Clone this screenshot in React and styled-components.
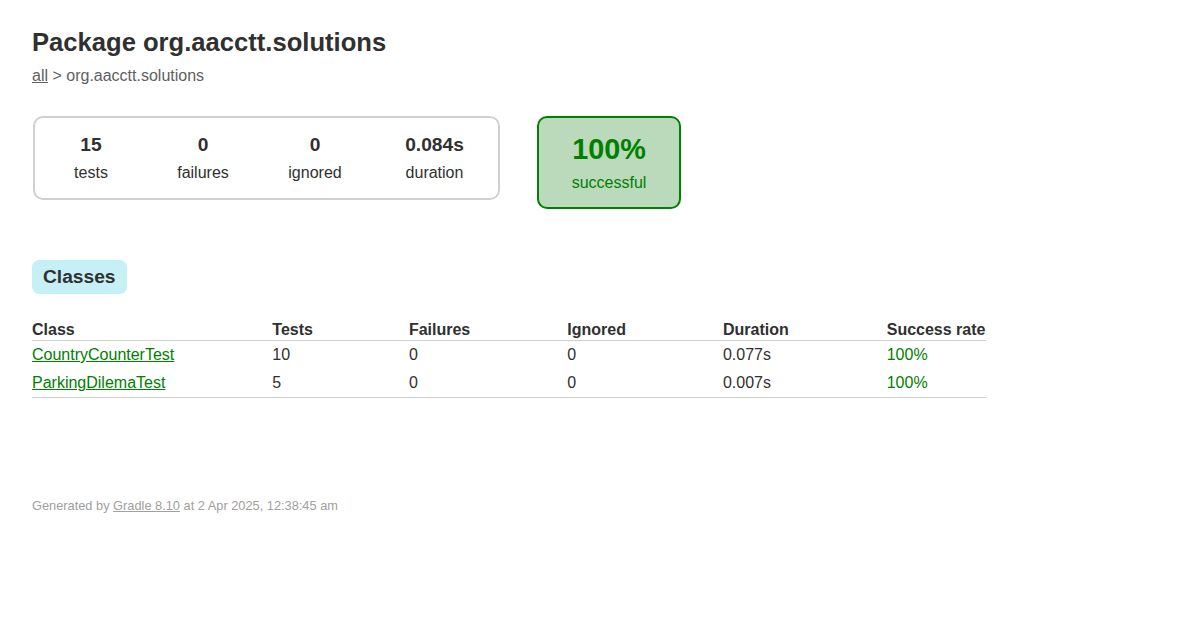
import React from 'react'
import styled, { createGlobalStyle } from 'styled-components'

const GlobalStyle = createGlobalStyle`
  body {
    margin: 0;
    padding: 0;
    font-family: "Liberation Sans", Arial, sans-serif;
    font-size: 16px;
    color: #303030;
    background: #fff;
  }
`

const Content = styled.div`
  padding: 28px 32px 30px 32px;
`

const Title = styled.h1`
  font-size: 25.6px;
  font-weight: bold;
  margin: 0 0 10px 0;
  white-space: nowrap;
`

const Breadcrumbs = styled.div`
  color: #606060;

  a {
    color: #606060;
    text-decoration: underline;
  }
`

const Summary = styled.div`
  display: flex;
  align-items: flex-start;
  gap: 37px;
  margin: 30px 0 40px 0;
  padding: 1px;
`

const SummaryGroup = styled.div`
  display: flex;
  border: solid 2px #d0d0d0;
  border-radius: 10px;
  padding: 1px 0;
  width: 463px;
`

const InfoBox = styled.div`
  width: ${p => p.$wide ? '127px' : '112px'};
  padding: 15px 0;
  text-align: center;
`

const Counter = styled.p`
  margin: 0 0 8px 0;
  font-size: ${p => p.$big ? '28.8px' : '19.2px'};
  font-weight: bold;
`

const Label = styled.p`
  margin: 0;
`

const SuccessBox = styled.div`
  width: 140px;
  padding: 15px 0;
  text-align: center;
  color: #008000;
  background-color: #bbd9bb;
  border: solid 2px #008000;
  border-radius: 10px;
`

const TabLinks = styled.ul`
  display: flex;
  list-style: none;
  margin: 0 0 16px 0;
  padding: 10px 0;
`

const TabLink = styled.li`
  padding: 5px 10px;
  border-radius: 7px;
  border: solid 1px #c5f0f5;
  background-color: #c5f0f5;

  a {
    display: block;
    font-size: 19.2px;
    font-weight: bold;
    color: #303030;
    text-decoration: none;
  }
`

const Table = styled.table`
  border-collapse: collapse;
  border-bottom: solid #d0d0d0 1px;
`

const cell = `
  white-space: nowrap;
  padding-left: 96px;
  padding-right: 1px;

  &:first-child {
    padding-left: 0;
    padding-right: 2px;
  }

  &:nth-child(2) {
    padding-right: 0;
  }

  &:nth-child(5) {
    padding-right: 2px;
  }
`

const Th = styled.th`
  ${cell}
  text-align: left;
  padding-top: 1px;
  padding-bottom: 1px;
  border-bottom: solid #d0d0d0 1px;
`

const Td = styled.td`
  ${cell}
  padding-top: 5px;
  padding-bottom: 5px;
  color: ${p => p.$success ? '#008000' : '#303030'};

  a {
    color: #008000;
    text-decoration: underline;
  }
`

const Footer = styled.div`
  margin-top: 100px;
  font-size: 12.8px;
  white-space: nowrap;
  color: #a0a0a0;

  a {
    color: #a0a0a0;
    text-decoration: underline;
  }
`

const classes = [
  { name: 'CountryCounterTest', tests: 10, failures: 0, ignored: 0, duration: '0.077s', rate: '100%' },
  { name: 'ParkingDilemaTest', tests: 5, failures: 0, ignored: 0, duration: '0.007s', rate: '100%' },
]

const App = () => {
  return (
    <Content>
      <GlobalStyle />
      <Title>Package org.aacctt.solutions</Title>
      <Breadcrumbs>
        <a href="#">all</a> &gt; org.aacctt.solutions
      </Breadcrumbs>

      <Summary>
        <SummaryGroup>
          <InfoBox>
            <Counter>15</Counter>
            <Label>tests</Label>
          </InfoBox>
          <InfoBox>
            <Counter>0</Counter>
            <Label>failures</Label>
          </InfoBox>
          <InfoBox>
            <Counter>0</Counter>
            <Label>ignored</Label>
          </InfoBox>
          <InfoBox $wide>
            <Counter>0.084s</Counter>
            <Label>duration</Label>
          </InfoBox>
        </SummaryGroup>
        <SuccessBox>
          <Counter $big>100%</Counter>
          <Label>successful</Label>
        </SuccessBox>
      </Summary>

      <TabLinks>
        <TabLink><a href="#tab0">Classes</a></TabLink>
      </TabLinks>

      <Table>
        <thead>
          <tr>
            <Th>Class</Th>
            <Th>Tests</Th>
            <Th>Failures</Th>
            <Th>Ignored</Th>
            <Th>Duration</Th>
            <Th>Success rate</Th>
          </tr>
        </thead>
        <tbody>
          {classes.map(c => (
            <tr key={c.name}>
              <Td><a href="#">{c.name}</a></Td>
              <Td>{c.tests}</Td>
              <Td>{c.failures}</Td>
              <Td>{c.ignored}</Td>
              <Td>{c.duration}</Td>
              <Td $success>{c.rate}</Td>
            </tr>
          ))}
        </tbody>
      </Table>

      <Footer>
        Generated by <a href="#">Gradle 8.10</a> at 2 Apr 2025, 12:38:45 am
      </Footer>
    </Content>
  )
}

export default App
